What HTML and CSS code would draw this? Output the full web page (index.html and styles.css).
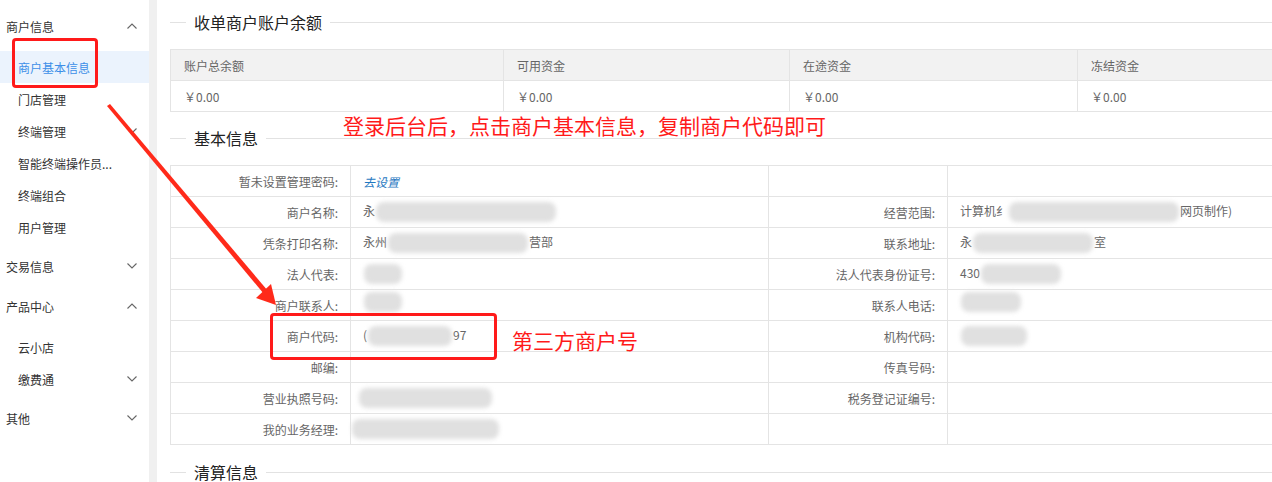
FILE: index.html
```html
<!DOCTYPE html>
<html lang="zh-CN">
<head>
    <meta charset="UTF-8">
    <meta name="viewport" content="width=device-width, initial-scale=1.0">
    <title>商户基本信息</title>
    <link rel="stylesheet" href="styles.css">
</head>
<body>
<div class="page">
    <div class="sidebar">
        <div class="menu-head">商户信息<svg class="chev" viewBox="0 0 10 6"><polyline points="0.5,5.5 5,1 9.5,5.5"/></svg></div>
        <div class="sub-list">
            <div class="sub-item active">商户基本信息</div>
            <div class="sub-item">门店管理</div>
            <div class="sub-item">终端管理<svg class="chev" viewBox="0 0 10 6"><polyline points="0.5,0.5 5,5 9.5,0.5"/></svg></div>
            <div class="sub-item">智能终端操作员...</div>
            <div class="sub-item">终端组合</div>
            <div class="sub-item">用户管理</div>
        </div>
        <div class="menu-head">交易信息<svg class="chev" viewBox="0 0 10 6"><polyline points="0.5,0.5 5,5 9.5,0.5"/></svg></div>
        <div class="menu-head">产品中心<svg class="chev" viewBox="0 0 10 6"><polyline points="0.5,5.5 5,1 9.5,5.5"/></svg></div>
        <div class="sub-list">
            <div class="sub-item">云小店</div>
            <div class="sub-item">缴费通<svg class="chev" viewBox="0 0 10 6"><polyline points="0.5,0.5 5,5 9.5,0.5"/></svg></div>
        </div>
        <div class="menu-head">其他<svg class="chev" viewBox="0 0 10 6"><polyline points="0.5,0.5 5,5 9.5,0.5"/></svg></div>
    </div>
    <div class="strip"></div>

    <div class="main">
        <div class="legend"><span class="line-s"></span><span class="legend-text">收单商户账户余额</span><span class="line-l"></span></div>
        <table class="grid balance">
            <colgroup><col class="c333"><col class="c286"><col class="c288"><col class="c288"></colgroup>
            <thead>
                <tr><th>账户总余额</th><th>可用资金</th><th>在途资金</th><th>冻结资金</th></tr>
            </thead>
            <tbody>
                <tr><td>￥0.00</td><td>￥0.00</td><td>￥0.00</td><td>￥0.00</td></tr>
            </tbody>
        </table>

        <div class="legend"><span class="line-s"></span><span class="legend-text">基本信息</span><span class="line-l"></span></div>
        <table class="grid info">
            <colgroup><col class="c180"><col class="c418"><col class="c179"><col class="c418"></colgroup>
            <tbody>
                <tr><td class="lbl">暂未设置管理密码:</td><td><a class="link">去设置</a></td><td></td><td></td></tr>
                <tr><td class="lbl">商户名称:</td><td>永<span class="blur w180"></span></td><td class="lbl">经营范围:</td><td>计算机纟<span class="blur w170"></span>网页制作)</td></tr>
                <tr><td class="lbl">凭条打印名称:</td><td>永州<span class="blur w140"></span>营部</td><td class="lbl">联系地址:</td><td>永<span class="blur w120"></span>室</td></tr>
                <tr><td class="lbl">法人代表:</td><td><span class="blur w40"></span></td><td class="lbl">法人代表身份证号:</td><td>430<span class="blur w80"></span></td></tr>
                <tr><td class="lbl">商户联系人:</td><td><span class="blur w40 up"></span></td><td class="lbl">联系人电话:</td><td><span class="blur w60 up"></span></td></tr>
                <tr><td class="lbl">商户代码:</td><td>(<span class="blur w84"></span>97</td><td class="lbl">机构代码:</td><td><span class="blur w66"></span></td></tr>
                <tr><td class="lbl">邮编:</td><td></td><td class="lbl">传真号码:</td><td></td></tr>
                <tr><td class="lbl">营业执照号码:</td><td class="tight"><span class="blur w130"></span></td><td class="lbl">税务登记证编号:</td><td></td></tr>
                <tr><td class="lbl">我的业务经理:</td><td class="tighter"><span class="blur w145"></span></td><td></td><td></td></tr>
            </tbody>
        </table>

        <div class="legend"><span class="line-s"></span><span class="legend-text">清算信息</span><span class="line-l"></span></div>
    </div>

    <!-- annotations drawn over the screenshot -->
    <div class="note note-top">登录后台后，点击商户基本信息，复制商户代码即可</div>
    <div class="note note-code">第三方商户号</div>
    <div class="mark mark-menu"></div>
    <div class="mark mark-code"></div>
    <svg class="arrow" width="300" height="320" viewBox="0 0 300 320">
        <polygon points="107,106 110,104 268,291 264,294" fill="#ff2a1a"/>
        <polygon points="276,305 256,298 271,284" fill="#ff2a1a"/>
    </svg>
</div>
</body>
</html>
```

FILE: styles.css
```css
body {
    margin: 0;
    font-family: "Noto Sans CJK SC", "Liberation Sans", sans-serif;
    font-size: 12px;
    color: #333;
    background: #fff;
}

.page {
    position: relative;
    display: flex;
    width: 1272px;
    height: 482px;
    overflow: hidden;
}

/* sidebar */
.sidebar {
    width: 149px;
    flex-shrink: 0;
    padding-top: 6px;
}
.strip {
    width: 8px;
    flex-shrink: 0;
    background: #f0f0f0;
}
.menu-head {
    height: 40px;
    display: flex;
    align-items: center;
    justify-content: space-between;
    padding: 0 12px 0 6px;
    color: #333;
}
.sub-list {
    padding: 5px 0 3px;
}
.sub-item {
    height: 32px;
    display: flex;
    align-items: center;
    justify-content: space-between;
    padding: 0 12px 0 18px;
    color: #333;
}
.sub-item.active {
    background: #ebf3fd;
    color: #3d8fe8;
}
.chev {
    width: 10px;
    height: 6px;
    fill: none;
    stroke: #666;
    stroke-width: 1.1;
}

/* main */
.main {
    flex: 1;
    padding-left: 13px;
    min-width: 0;
}
.legend {
    height: 44px;
    display: flex;
    align-items: center;
}
.legend + .grid {
    margin-top: 5px;
}
.grid + .legend {
    margin-top: 4px;
}
.info + .legend {
    margin-top: 5px;
}
.line-s {
    width: 16px;
    border-top: 1px solid #e2e2e2;
}
.line-l {
    flex: 1;
    border-top: 1px solid #e2e2e2;
}
.legend-text {
    padding: 0 8px;
    font-size: 16px;
    color: #222;
}

.grid {
    border-collapse: collapse;
    table-layout: fixed;
    width: 1195px;
}
.grid th,
.grid td {
    height: 30px;
    padding: 0 12px;
    border: 1px solid #e4e4e4;
    color: #666;
    font-weight: normal;
    text-align: left;
    white-space: nowrap;
}
.grid th {
    background: #f2f2f2;
}
.balance th,
.balance td {
    padding-left: 13px;
}
.c333 { width: 333px; }
.c286 { width: 286px; }
.c288 { width: 288px; }
.c180 { width: 180px; }
.c418 { width: 418px; }
.c179 { width: 179px; }

.info td.lbl {
    text-align: right;
    padding-right: 12px;
}
.info td.tight { padding-left: 7px; }
.info td.tighter { padding-left: 0; }
.link {
    color: #1f78c1;
    font-style: italic;
}

.blur {
    display: inline-block;
    height: 20px;
    vertical-align: middle;
    background: #e0e0e0;
    border-radius: 8px;
    filter: blur(2px);
    margin: 0 1px;
}
.blur.up { margin-top: -10px; }
.w40 { width: 38px; }
.w60 { width: 60px; }
.w66 { width: 66px; }
.w80 { width: 80px; }
.w84 { width: 84px; }
.w120 { width: 120px; }
.w130 { width: 133px; }
.w140 { width: 140px; }
.w145 { width: 147px; }
.w170 { width: 170px; }
.w180 { width: 180px; }

/* annotations */
.note {
    position: absolute;
    color: #ff1a1a;
    font-size: 21px;
    line-height: 24px;
    white-space: nowrap;
}
.note-top {
    left: 343px;
    top: 113px;
}
.note-code {
    left: 512px;
    top: 328px;
}
.mark {
    position: absolute;
    border: 3px solid #ff1a1a;
    border-radius: 4px;
}
.mark-menu {
    left: 12px;
    top: 38px;
    width: 80px;
    height: 44px;
}
.mark-code {
    left: 270px;
    top: 313px;
    width: 221px;
    height: 41px;
}
.arrow {
    position: absolute;
    left: 0;
    top: 0;
}
```
